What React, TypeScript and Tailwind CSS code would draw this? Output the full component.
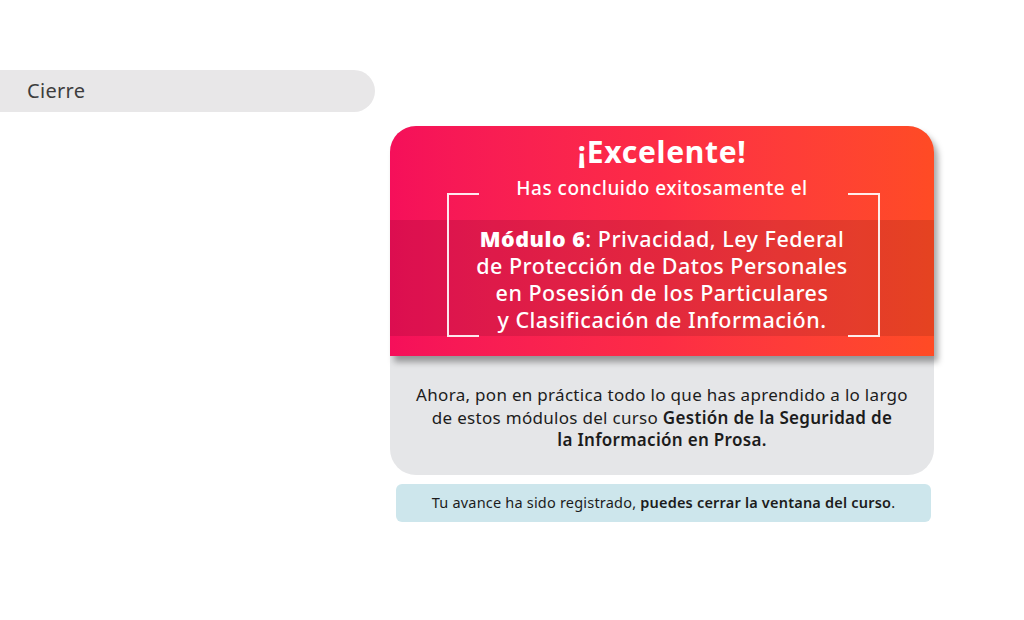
const font = { fontFamily: "'Noto Sans', Roboto, sans-serif" };

export default function App() {
  return (
    <div className="h-[620px] w-[1024px] overflow-hidden bg-white" style={font}>
      <div className="pt-[70px]">
        <div className="flex h-[42px] w-[375px] items-center rounded-r-full bg-[#e8e7e8] pl-[27px] text-[20px] tracking-[0.3px] text-[#3d3d3d]">
          Cierre
        </div>
      </div>

      <div className="ml-[390px] mt-[14px] w-[544px]">
        <div className="rounded-[26px] bg-[#e5e6e8]">
          <div className="relative rounded-t-[26px] bg-gradient-to-r from-[#f50f5a] via-[#fd2c45] to-[#ff4b24] pb-[20px] pt-[9px] text-center text-white shadow-[4px_6px_6px_rgba(0,0,0,0.35)]">
            <h1 className="text-[30px] font-bold leading-[34px] tracking-[0.7px]">¡Excelente!</h1>
            <p className="mt-[8px] text-[19px] font-medium leading-[22px] tracking-[0.5px]">Has concluido exitosamente el</p>

            <div className="relative mt-[21px]">
              <div className="absolute left-[57px] top-[-27px] h-[144px] w-[32px] border-b-2 border-l-2 border-t-2 border-white/90" />
              <div className="absolute right-[54px] top-[-27px] h-[144px] w-[32px] border-b-2 border-r-2 border-t-2 border-white/90" />
              <div className="bg-black/10 pb-[3px] pt-[5px] text-[21.5px] font-medium leading-[27px] tracking-[0.5px]">
                <p><span className="font-black">Módulo 6</span>: Privacidad, Ley Federal</p>
                <p>de Protección de Datos Personales</p>
                <p>en Posesión de los Particulares</p>
                <p>y Clasificación de Información.</p>
              </div>
            </div>
          </div>

          <div className="px-2 pb-[23px] pt-[28px] text-center text-[17px] leading-[22.5px] tracking-[0.3px] text-[#1c1c1c]">
            <p>Ahora, pon en práctica todo lo que has aprendido a lo largo</p>
            <p>
              de estos módulos del curso <span className="font-semibold">Gestión de la Seguridad de</span>
            </p>
            <p className="font-semibold">la Información en Prosa.</p>
          </div>
        </div>

        <div className="ml-[6px] mt-[9px] flex h-[38px] w-[535px] items-center justify-center rounded-[6px] bg-[#cde6ec] text-[14.5px] tracking-[0.2px] text-[#1c1c1c]">
          <span>
            Tu avance ha sido registrado, <span className="font-semibold">puedes cerrar la ventana del curso</span>.
          </span>
        </div>
      </div>
    </div>
  );
}
